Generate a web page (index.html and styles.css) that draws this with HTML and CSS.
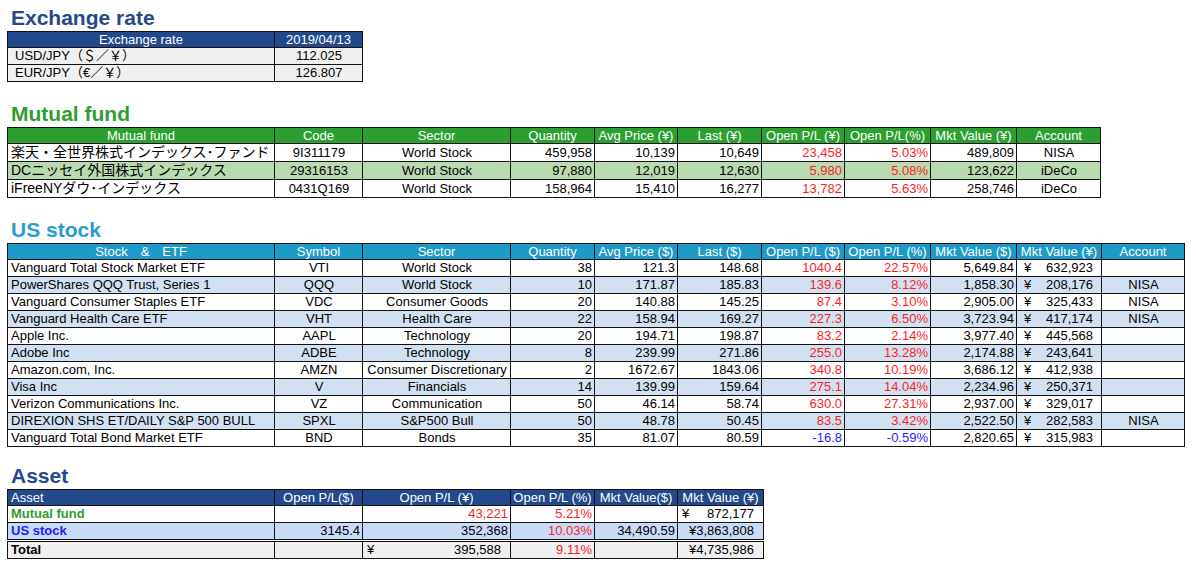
FILE: index.html
```html
<!DOCTYPE html>
<html>
<head>
<meta charset="utf-8">
<link rel="stylesheet" href="styles.css">
</head>
<body>
<section class="sec sec-first">
  <h2 class="title t-blue">Exchange rate</h2>
  <table class="tbl w-ex">
    <colgroup><col class="c-name"><col class="c-code"></colgroup>
    <tr class="hd hd-blue"><th>Exchange rate</th><th>2019/04/13</th></tr>
    <tr class="gray"><td class="ind">USD/JPY（＄／￥）</td><td class="c">112.025</td></tr>
    <tr class="gray"><td class="ind">EUR/JPY（€／￥）</td><td class="c">126.807</td></tr>
  </table>
</section>

<section class="sec">
  <h2 class="title t-green">Mutual fund</h2>
  <table class="tbl w-mf">
    <colgroup><col class="c-name"><col class="c-code"><col class="c-sector"><col class="c-qty"><col class="c-avg"><col class="c-last"><col class="c-pl"><col class="c-plp"><col class="c-mv"><col class="c-acct2"></colgroup>
    <tr class="hd hd-green"><th>Mutual fund</th><th>Code</th><th>Sector</th><th>Quantity</th><th>Avg Price (¥)</th><th>Last (¥)</th><th>Open P/L (¥)</th><th>Open P/L(%)</th><th>Mkt Value (¥)</th><th>Account</th></tr>
    <tr class="mf"><td class="jp">楽天・全世界株式インデックス･ファンド</td><td class="c">9I311179</td><td class="c">World Stock</td><td class="r">459,958</td><td class="r">10,139</td><td class="r">10,649</td><td class="r red">23,458</td><td class="r red">5.03%</td><td class="r">489,809</td><td class="c">NISA</td></tr>
    <tr class="mf lgreen"><td class="jp">DCニッセイ外国株式インデックス</td><td class="c">29316153</td><td class="c">World Stock</td><td class="r">97,880</td><td class="r">12,019</td><td class="r">12,630</td><td class="r red">5,980</td><td class="r red">5.08%</td><td class="r">123,622</td><td class="c">iDeCo</td></tr>
    <tr class="mf"><td class="jp">iFreeNYダウ･インデックス</td><td class="c">0431Q169</td><td class="c">World Stock</td><td class="r">158,964</td><td class="r">15,410</td><td class="r">16,277</td><td class="r red">13,782</td><td class="r red">5.63%</td><td class="r">258,746</td><td class="c">iDeCo</td></tr>
  </table>
</section>

<section class="sec">
  <h2 class="title t-cyan">US stock</h2>
  <table class="tbl w-us">
    <colgroup><col class="c-name"><col class="c-code"><col class="c-sector"><col class="c-qty"><col class="c-avg"><col class="c-last"><col class="c-pl"><col class="c-plp"><col class="c-mv"><col class="c-mvy"><col class="c-acct"></colgroup>
    <tr class="hd hd-cyan"><th>Stock　&amp;　ETF</th><th>Symbol</th><th>Sector</th><th>Quantity</th><th>Avg Price ($)</th><th>Last ($)</th><th>Open P/L ($)</th><th>Open P/L (%)</th><th>Mkt Value ($)</th><th>Mkt Value (¥)</th><th>Account</th></tr>
    <tr><td>Vanguard Total Stock Market ETF</td><td class="c">VTI</td><td class="c">World Stock</td><td class="r">38</td><td class="r">121.3</td><td class="r">148.68</td><td class="r red">1040.4</td><td class="r red">22.57%</td><td class="r">5,649.84</td><td class="yen"><span class="yw"><span>¥</span><span>632,923</span></span></td><td class="c"></td></tr>
    <tr class="lblue"><td>PowerShares QQQ Trust, Series 1</td><td class="c">QQQ</td><td class="c">World Stock</td><td class="r">10</td><td class="r">171.87</td><td class="r">185.83</td><td class="r red">139.6</td><td class="r red">8.12%</td><td class="r">1,858.30</td><td class="yen"><span class="yw"><span>¥</span><span>208,176</span></span></td><td class="c">NISA</td></tr>
    <tr><td>Vanguard Consumer Staples ETF</td><td class="c">VDC</td><td class="c">Consumer Goods</td><td class="r">20</td><td class="r">140.88</td><td class="r">145.25</td><td class="r red">87.4</td><td class="r red">3.10%</td><td class="r">2,905.00</td><td class="yen"><span class="yw"><span>¥</span><span>325,433</span></span></td><td class="c">NISA</td></tr>
    <tr class="lblue"><td>Vanguard Health Care ETF</td><td class="c">VHT</td><td class="c">Health Care</td><td class="r">22</td><td class="r">158.94</td><td class="r">169.27</td><td class="r red">227.3</td><td class="r red">6.50%</td><td class="r">3,723.94</td><td class="yen"><span class="yw"><span>¥</span><span>417,174</span></span></td><td class="c">NISA</td></tr>
    <tr><td>Apple Inc.</td><td class="c">AAPL</td><td class="c">Technology</td><td class="r">20</td><td class="r">194.71</td><td class="r">198.87</td><td class="r red">83.2</td><td class="r red">2.14%</td><td class="r">3,977.40</td><td class="yen"><span class="yw"><span>¥</span><span>445,568</span></span></td><td class="c"></td></tr>
    <tr class="lblue"><td>Adobe Inc</td><td class="c">ADBE</td><td class="c">Technology</td><td class="r">8</td><td class="r">239.99</td><td class="r">271.86</td><td class="r red">255.0</td><td class="r red">13.28%</td><td class="r">2,174.88</td><td class="yen"><span class="yw"><span>¥</span><span>243,641</span></span></td><td class="c"></td></tr>
    <tr><td>Amazon.com, Inc.</td><td class="c">AMZN</td><td class="c">Consumer Discretionary</td><td class="r">2</td><td class="r">1672.67</td><td class="r">1843.06</td><td class="r red">340.8</td><td class="r red">10.19%</td><td class="r">3,686.12</td><td class="yen"><span class="yw"><span>¥</span><span>412,938</span></span></td><td class="c"></td></tr>
    <tr class="lblue"><td>Visa Inc</td><td class="c">V</td><td class="c">Financials</td><td class="r">14</td><td class="r">139.99</td><td class="r">159.64</td><td class="r red">275.1</td><td class="r red">14.04%</td><td class="r">2,234.96</td><td class="yen"><span class="yw"><span>¥</span><span>250,371</span></span></td><td class="c"></td></tr>
    <tr><td>Verizon Communications Inc.</td><td class="c">VZ</td><td class="c">Communication</td><td class="r">50</td><td class="r">46.14</td><td class="r">58.74</td><td class="r red">630.0</td><td class="r red">27.31%</td><td class="r">2,937.00</td><td class="yen"><span class="yw"><span>¥</span><span>329,017</span></span></td><td class="c"></td></tr>
    <tr class="lblue"><td>DIREXION SHS ET/DAILY S&amp;P 500 BULL</td><td class="c">SPXL</td><td class="c">S&amp;P500 Bull</td><td class="r">50</td><td class="r">48.78</td><td class="r">50.45</td><td class="r red">83.5</td><td class="r red">3.42%</td><td class="r">2,522.50</td><td class="yen"><span class="yw"><span>¥</span><span>282,583</span></span></td><td class="c">NISA</td></tr>
    <tr><td>Vanguard Total Bond Market ETF</td><td class="c">BND</td><td class="c">Bonds</td><td class="r">35</td><td class="r">81.07</td><td class="r">80.59</td><td class="r blue">-16.8</td><td class="r blue">-0.59%</td><td class="r">2,820.65</td><td class="yen"><span class="yw"><span>¥</span><span>315,983</span></span></td><td class="c"></td></tr>
  </table>
</section>

<section class="sec sec-asset">
  <h2 class="title t-blue">Asset</h2>
  <table class="tbl w-as">
    <colgroup><col class="c-name"><col class="c-code"><col class="c-sector"><col class="c-qty"><col class="c-avg"><col class="c-mva"></colgroup>
    <tr class="hd hd-blue"><th class="l">Asset</th><th>Open P/L($)</th><th>Open P/L (¥)</th><th>Open P/L (%)</th><th>Mkt Value($)</th><th>Mkt Value (¥)</th></tr>
    <tr><td class="b green">Mutual fund</td><td></td><td class="r red">43,221</td><td class="r red">5.21%</td><td></td><td class="yen ya"><span class="yw"><span>¥</span><span>872,177</span></span></td></tr>
    <tr class="pblue"><td class="b blue">US stock</td><td class="r">3145.4</td><td class="r">352,368</td><td class="r red">10.03%</td><td class="r">34,490.59</td><td class="yen ya"><span class="yw"><span></span><span>¥3,863,808</span></span></td></tr>
    <tr class="total gray"><td class="b">Total</td><td></td><td class="yen ya"><span class="yw"><span>¥</span><span>395,588</span></span></td><td class="r red">9.11%</td><td></td><td class="yen ya"><span class="yw"><span></span><span>¥4,735,986</span></span></td></tr>
  </table>
</section>
</body>
</html>
```

FILE: styles.css
```css
html, body {
  margin: 0;
  padding: 0;
  background: #ffffff;
}
body {
  padding: 6px 0 0 7px;
  font-family: "Liberation Sans", Arial, "Noto Sans CJK JP", sans-serif;
  font-size: 13px;
  color: #000;
}
.sec {
  margin-top: 20px;
}
.sec-first {
  margin-top: 0;
}
.sec-asset {
  margin-top: 17px;
}
.title {
  margin: 0 0 1px 4px;
  font-size: 21px;
  line-height: 24px;
  font-weight: bold;
}
.t-blue { color: #27498a; }
.t-green { color: #2e9f2e; }
.t-cyan { color: #2b9ccc; }

.tbl {
  border-collapse: collapse;
  table-layout: fixed;
}
.w-ex { width: 356px; }
.w-mf { width: 1094px; }
.w-us { width: 1178px; }
.w-as { width: 757px; }

.c-name { width: 267px; }
.c-code { width: 88px; }
.c-sector { width: 148px; }
.c-qty { width: 84px; }
.c-avg { width: 83px; }
.c-last { width: 84px; }
.c-pl { width: 83px; }
.c-plp { width: 86px; }
.c-mv { width: 86px; }
.c-mvy { width: 85px; }
.c-acct { width: 83px; }
.c-acct2 { width: 84px; }
.c-mva { width: 86px; }

.tbl th, .tbl td {
  border: 1px solid #111;
  padding: 0 2px 0 3px;
  height: 16px;
  line-height: 16px;
  white-space: nowrap;
  overflow: hidden;
  font-weight: normal;
  text-align: left;
}
.tbl tr.hd th {
  height: 15px;
  line-height: 15px;
}
.tbl tr.mf td {
  height: 17px;
  line-height: 17px;
}
.tbl th {
  color: #fff;
  text-align: center;
  padding: 0 1px;
}
.tbl th.l { text-align: left; padding-left: 3px; }
.hd-blue th { background: #23498c; }
.hd-green th { background: #2ba02e; }
.hd-cyan th { background: #1d9ac8; }

.gray td { background: #f0f0f0; }
.lgreen td { background: #b9dab1; }
.lblue td { background: #d2e1f1; }
.pblue td { background: #c9daf6; }

.tbl td.c { text-align: center; }
.tbl td.r { text-align: right; }
.tbl td.ind { padding-left: 7px; }
.tbl td.jp { font-size: 14px; padding-left: 3px; }
.red { color: #fb1e1e; }
.blue { color: #1d1dfb; }
.green { color: #2e9f2e; }
.tbl td.b { font-weight: bold; }

.tbl td.yen { padding: 0 8px 0 7px; }
.tbl td.ya { padding: 0 9px 0 4px; }
.yw {
  display: flex;
  justify-content: space-between;
}

.tbl tr.total td {
  border-top: 3px double #111;
  height: 16px;
}
```
